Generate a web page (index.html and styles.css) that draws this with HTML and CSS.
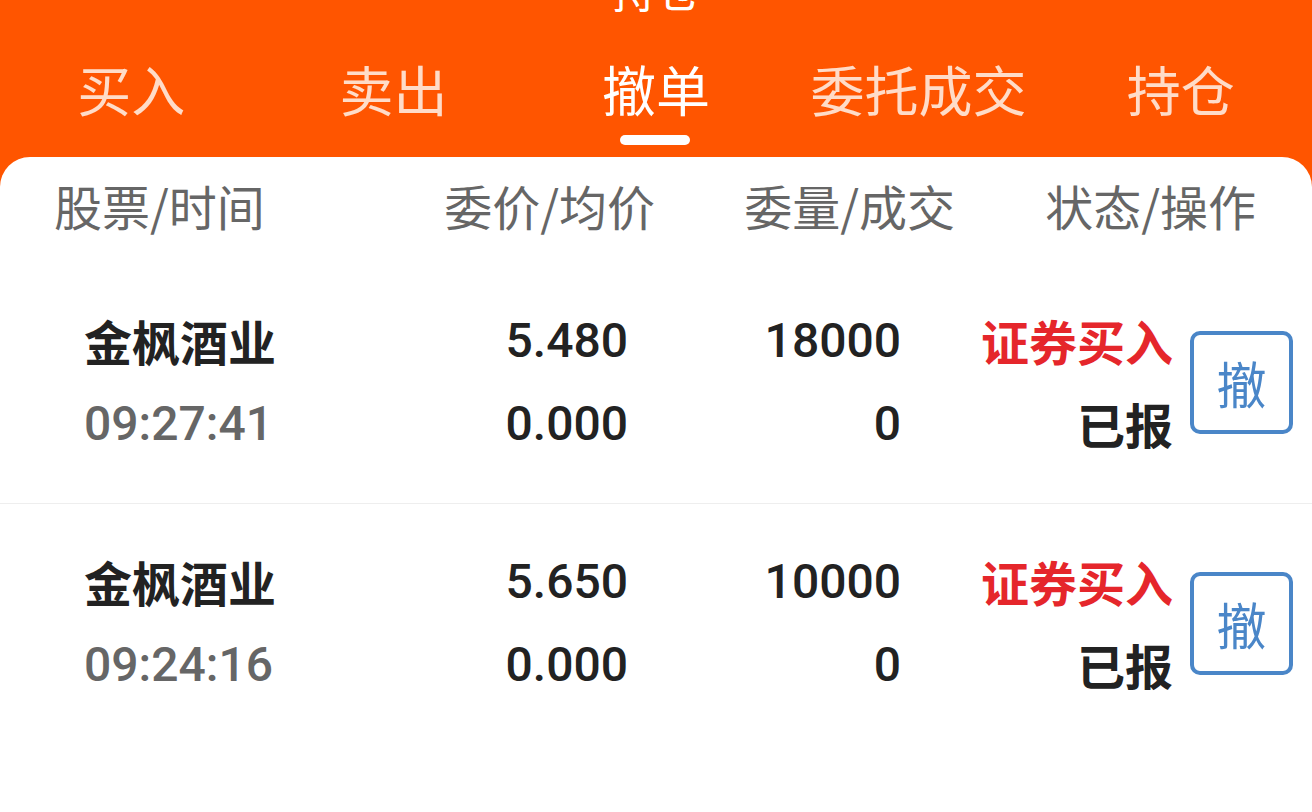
FILE: index.html
```html
<!DOCTYPE html>
<html lang="zh-CN">
<head>
    <meta charset="UTF-8">
    <meta name="viewport" content="width=device-width, initial-scale=1.0">
    <title>撤单</title>
    <link rel="stylesheet" href="styles.css">
</head>
<body>
    <div class="app">
        <div class="top-bar">
            <div class="title">持仓</div>
            <div class="tabs">
                <div class="tab">买入</div>
                <div class="tab">卖出</div>
                <div class="tab active">撤单</div>
                <div class="tab">委托成交</div>
                <div class="tab">持仓</div>
            </div>
        </div>

        <div class="panel">
            <div class="list-head">
                <div>股票/时间</div>
                <div class="right">委价/均价</div>
                <div class="right">委量/成交</div>
                <div class="right">状态/操作</div>
            </div>

            <!-- 委托列表 -->
            <div class="order">
                <div class="cell">
                    <div class="name">金枫酒业</div>
                    <div class="time">09:27:41</div>
                </div>
                <div class="cell right num">
                    <div>5.480</div>
                    <div>0.000</div>
                </div>
                <div class="cell right num">
                    <div>18000</div>
                    <div>0</div>
                </div>
                <div class="cell right">
                    <div class="type">证券买入</div>
                    <div class="status">已报</div>
                </div>
                <button class="cancel-btn">撤</button>
            </div>

            <div class="order">
                <div class="cell">
                    <div class="name">金枫酒业</div>
                    <div class="time">09:24:16</div>
                </div>
                <div class="cell right num">
                    <div>5.650</div>
                    <div>0.000</div>
                </div>
                <div class="cell right num">
                    <div>10000</div>
                    <div>0</div>
                </div>
                <div class="cell right">
                    <div class="type">证券买入</div>
                    <div class="status">已报</div>
                </div>
                <button class="cancel-btn">撤</button>
            </div>
        </div>
    </div>
</body>
</html>
```

FILE: styles.css
```css
* {
    box-sizing: border-box;
}
html, body {
    margin: 0;
    height: 100%;
    overflow: hidden;
}
body {
    font-family: Roboto, "Noto Sans CJK SC", sans-serif;
    background-color: #ff5500;
    color: #222;
}
.app {
    display: flex;
    flex-direction: column;
    height: 100vh;
}
.top-bar {
    background-color: #ff5500;
    padding-bottom: 12px;
}
.title {
    margin-top: -33px;
    font-size: 44px;
    line-height: 44px;
    text-align: center;
    color: #fff;
    font-family: "Noto Sans CJK SC", sans-serif;
}
.tabs {
    display: grid;
    grid-template-columns: repeat(5, 1fr);
    padding-top: 50px;
}
.tab {
    position: relative;
    text-align: center;
    font-family: "Noto Sans CJK SC", sans-serif;
    font-size: 54px;
    line-height: 56px;
    color: #ffdcc8;
    padding-bottom: 28px;
}
.tab.active {
    color: #fff;
}
.tab.active::after {
    content: "";
    position: absolute;
    left: 50%;
    bottom: 0;
    width: 70px;
    height: 10px;
    margin-left: -36px;
    border-radius: 5px;
    background-color: #fff;
}
.panel {
    flex: 1;
    background-color: #fff;
    border-radius: 30px 30px 0 0;
}
.list-head {
    display: grid;
    grid-template-columns: 300px 301px 300px 301px;
    padding-left: 54px;
    padding-bottom: 10px;
    height: 106px;
    align-items: center;
    font-family: "Noto Sans CJK SC", sans-serif;
    font-size: 48px;
    color: #666;
}
.right {
    text-align: right;
}
.order {
    display: grid;
    grid-template-columns: 300px 244px 273px 272px 120px;
    align-items: center;
    padding: 36px 0 38px 84px;
    border-bottom: 1px solid #eee;
}
.order:last-child {
    border-bottom: none;
}
.cell div {
    font-size: 48px;
    line-height: 83px;
    white-space: nowrap;
}
.name {
    font-family: "Noto Sans CJK SC", sans-serif;
    font-weight: 700;
    color: #222;
}
.time {
    font-weight: 500;
    color: #666;
}
.num div {
    font-weight: 500;
    color: #222;
}
.type {
    font-family: "Noto Sans CJK SC", sans-serif;
    font-weight: 700;
    color: #e5262b;
}
.status {
    font-family: "Noto Sans CJK SC", sans-serif;
    font-weight: 700;
    color: #222;
}
.cancel-btn {
    justify-self: end;
    width: 103px;
    height: 103px;
    padding: 0;
    border: 4px solid #4a86c8;
    border-radius: 10px;
    background-color: #fff;
    color: #4a86c8;
    font-family: "Noto Sans CJK SC", sans-serif;
    font-size: 50px;
}
```
